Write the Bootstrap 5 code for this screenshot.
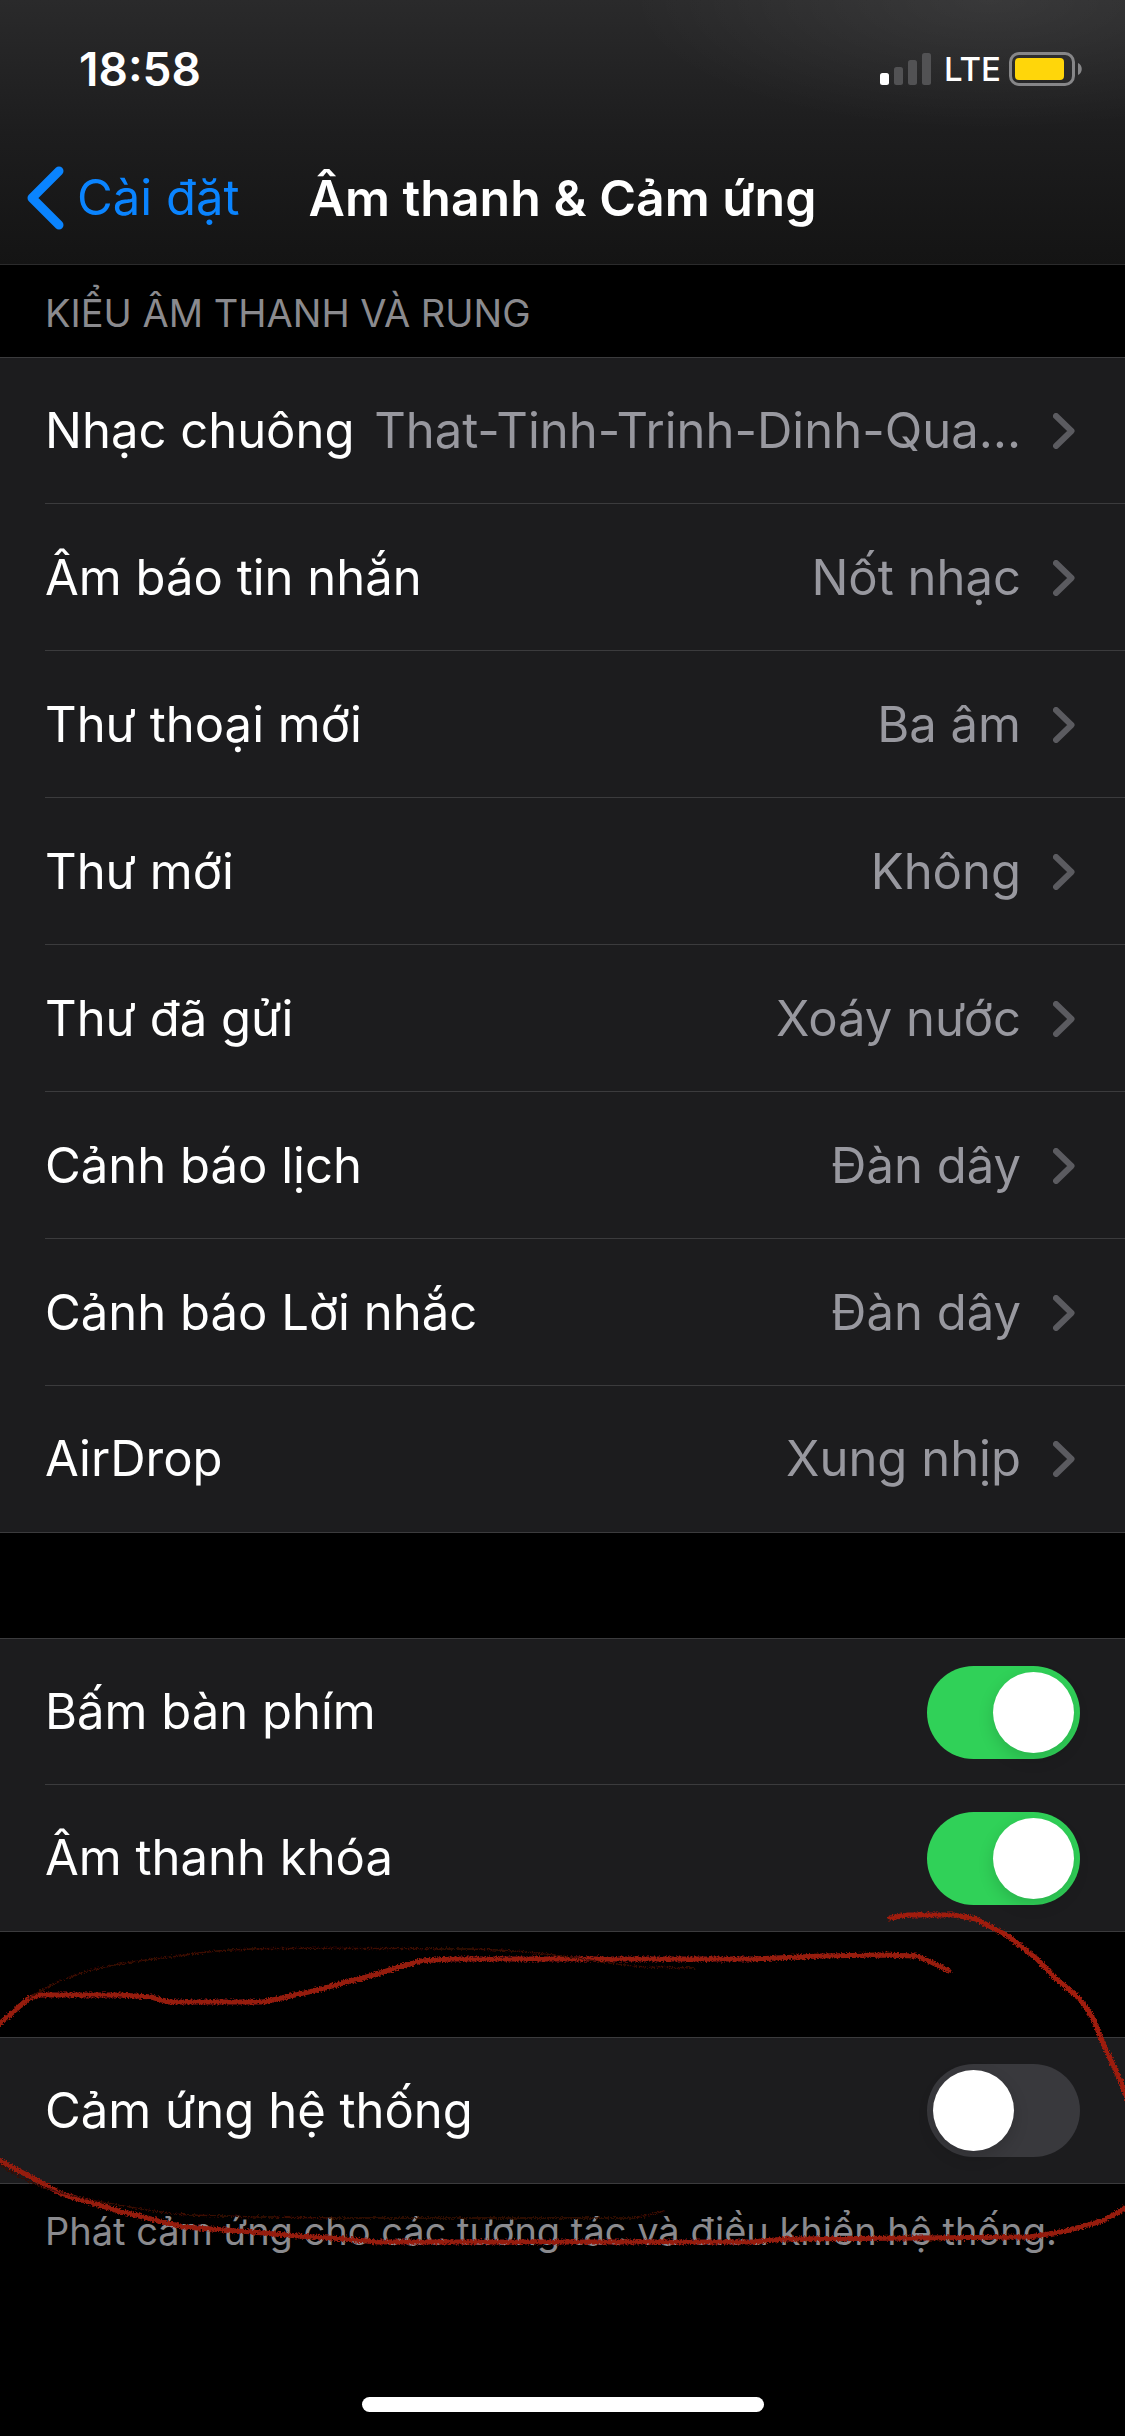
<!DOCTYPE html>
<html lang="vi" data-bs-theme="dark">
<head>
<meta charset="utf-8">
<meta name="viewport" content="width=device-width, initial-scale=1">
<title>Âm thanh &amp; Cảm ứng</title>
<link href="https://cdn.jsdelivr.net/npm/bootstrap@5.3.0/dist/css/bootstrap.min.css" rel="stylesheet">
<style>
  body { background: #000; color: #fff; font-family: Inter, "Noto Sans", sans-serif; font-size: 49px; line-height: 60px; }
  .top-area { height: 265px; border-bottom: 1px solid #2b2b2c;
    background: radial-gradient(ellipse 360px 130px at 88% 0, rgba(255,255,255,.07), transparent), linear-gradient(#2a2a2b, #1d1d1e 50%, #141414); }
  .status-bar { height: 138px; padding: 0 42px 0 79px; }
  .clock { font-size: 46px; font-weight: 600; }
  .network { font-size: 33px; font-weight: 500; }
  .title-bar { display: grid; grid-template-columns: 1fr auto 1fr; height: 120px; padding: 0 26px; }
  .title-bar h1 { font-size: 50px; line-height: 60px; font-weight: 600; }
  .back-link { color: #0a84ff; gap: 13px; }
  .section-head { font-size: 38px; line-height: 44px; font-weight: 400; color: #8a8a8e; padding: 26px 45px 22px; }
  .settings { --bs-list-group-bg: #1c1c1e; --bs-list-group-color: #fff; border-top: 1px solid #3b3b3d; border-bottom: 1px solid #3b3b3d; }
  .settings .list-group-item { height: 147px; border: 0; padding: 0 45px; gap: 16px; position: relative; }
  .settings .list-group-item:first-child { height: 146px; }
  .settings .list-group-item:last-child { height: 146px; }
  .settings .list-group-item:only-child { height: 145px; }
  .settings .list-group-item:not(:last-child)::after { content: ""; position: absolute; left: 45px; right: 0; bottom: 0; border-bottom: 1px solid #3b3b3d; }
  .row-value { color: #98989f; gap: 32px; }
  .row-value svg { margin-right: 5px; flex: none; }
  .spaced { margin-top: 105px; }
  .settings .form-check-input { width: 153px; height: 93px; margin: 0; border: 0; border-radius: 47px; background: #39393d; padding: 6px; box-shadow: none; }
  .settings .form-check-input::before { content: ""; display: block; width: 81px; height: 81px; border-radius: 50%; background: #fff; box-shadow: 0 6px 16px rgba(0,0,0,.15); }
  .settings .form-check-input:checked { background: #30d158; }
  .settings .form-check-input:checked::before { margin-left: auto; }
  .footnote { font-size: 38px; line-height: 44px; color: #8a8a8e; padding: 25px 45px; }
  .scribble { left: 0; top: -137px; width: 100%; height: 360px; pointer-events: none; z-index: 2; }
  .home-bar { width: 402px; height: 15px; border-radius: 8px; background: #fff; margin-bottom: 24px; }
</style>
<script src="https://cdn.jsdelivr.net/npm/bootstrap@5.3.0/dist/js/bootstrap.bundle.min.js"></script>
</head>
<body class="d-flex flex-column min-vh-100 overflow-x-hidden">

<svg class="d-none" aria-hidden="true">
  <symbol id="chevron" viewBox="0 0 22 36"><path d="M3 3 18.500 18 3 33" fill="none" stroke="#5b5b60" stroke-width="6" stroke-linecap="round" stroke-linejoin="round"/></symbol>
</svg>

<header class="top-area">
  <div class="status-bar d-flex align-items-center justify-content-between">
    <span class="clock">18:58</span>
    <div class="d-flex align-items-center">
      <svg width="52" height="32" viewBox="0 0 52 32" role="img" aria-label="Sóng di động">
        <rect x="0" y="20" width="9" height="12" rx="2.500" fill="#fff"/>
        <g fill="#525254"><rect x="14" y="14" width="9" height="18" rx="2.500"/><rect x="28" y="7" width="9" height="25" rx="2.500"/><rect x="42" y="0" width="9" height="32" rx="2.500"/></g>
      </svg>
      <span class="network ms-2 me-2 ps-1">LTE</span>
      <svg width="74" height="34" viewBox="0 0 74 34" role="img" aria-label="Pin">
        <rect x="1.500" y="1.500" width="63" height="31" rx="8.500" fill="none" stroke="#868688" stroke-width="3"/>
        <rect x="6" y="6" width="49" height="22" rx="4" fill="#ffd60a"/>
        <path d="M69 11c5 2 5 10 0 12z" fill="#868688"/>
      </svg>
    </div>
  </div>
  <nav class="title-bar align-items-center">
    <a href="#" class="back-link d-flex align-items-center text-decoration-none">
      <svg width="38" height="64" viewBox="0 0 38 64" aria-hidden="true"><path d="M33 5 6 32 33 59" fill="none" stroke="#0a84ff" stroke-width="9" stroke-linecap="round" stroke-linejoin="round"/></svg>
      Cài đặt
    </a>
    <h1 class="m-0 text-nowrap">Âm thanh &amp; Cảm ứng</h1>
  </nav>
</header>

<main>
  <h2 class="section-head text-uppercase m-0">Kiểu âm thanh và rung</h2>
  <div class="settings list-group list-group-flush">
    <a href="#" class="list-group-item d-flex align-items-center justify-content-between text-nowrap">Nhạc chuông<span class="row-value d-flex align-items-center">That-Tinh-Trinh-Dinh-Qua…<svg width="22" height="36"><use href="#chevron"/></svg></span></a>
    <a href="#" class="list-group-item d-flex align-items-center justify-content-between">Âm báo tin nhắn<span class="row-value d-flex align-items-center">Nốt nhạc<svg width="22" height="36"><use href="#chevron"/></svg></span></a>
    <a href="#" class="list-group-item d-flex align-items-center justify-content-between">Thư thoại mới<span class="row-value d-flex align-items-center">Ba âm<svg width="22" height="36"><use href="#chevron"/></svg></span></a>
    <a href="#" class="list-group-item d-flex align-items-center justify-content-between">Thư mới<span class="row-value d-flex align-items-center">Không<svg width="22" height="36"><use href="#chevron"/></svg></span></a>
    <a href="#" class="list-group-item d-flex align-items-center justify-content-between">Thư đã gửi<span class="row-value d-flex align-items-center">Xoáy nước<svg width="22" height="36"><use href="#chevron"/></svg></span></a>
    <a href="#" class="list-group-item d-flex align-items-center justify-content-between">Cảnh báo lịch<span class="row-value d-flex align-items-center">Đàn dây<svg width="22" height="36"><use href="#chevron"/></svg></span></a>
    <a href="#" class="list-group-item d-flex align-items-center justify-content-between">Cảnh báo Lời nhắc<span class="row-value d-flex align-items-center">Đàn dây<svg width="22" height="36"><use href="#chevron"/></svg></span></a>
    <a href="#" class="list-group-item d-flex align-items-center justify-content-between">AirDrop<span class="row-value d-flex align-items-center">Xung nhịp<svg width="22" height="36"><use href="#chevron"/></svg></span></a>
  </div>

  <div class="settings list-group list-group-flush spaced">
    <div class="list-group-item d-flex align-items-center justify-content-between">
      <label for="keyClicks">Bấm bàn phím</label>
      <input class="form-check-input" type="checkbox" role="switch" id="keyClicks" checked>
    </div>
    <div class="list-group-item d-flex align-items-center justify-content-between">
      <label for="lockSound">Âm thanh khóa</label>
      <input class="form-check-input" type="checkbox" role="switch" id="lockSound" checked>
    </div>
  </div>

  <section class="position-relative spaced">
    <div class="settings list-group list-group-flush">
      <div class="list-group-item d-flex align-items-center justify-content-between">
        <label for="haptics">Cảm ứng hệ thống</label>
        <input class="form-check-input" type="checkbox" role="switch" id="haptics">
      </div>
    </div>
    <p class="footnote m-0">Phát cảm ứng cho các tương tác và điều khiển hệ thống.</p>

    <!-- hand-drawn red crayon ring around the haptics switch -->
    <svg class="scribble position-absolute" viewBox="0 1900 1125 360" preserveAspectRatio="none" fill="none" stroke-linecap="round" stroke-linejoin="round" aria-hidden="true">
      <defs>
        <filter id="crayon" filterUnits="userSpaceOnUse" x="-20" y="1900" width="1165" height="360">
          <feTurbulence type="fractalNoise" baseFrequency="0.6" numOctaves="2" seed="4"/>
          <feDisplacementMap in="SourceGraphic" scale="5" xChannelSelector="R" yChannelSelector="G"/>
        </filter>
      </defs>
      <g filter="url(#crayon)" transform="translate(1 1)">
        <g stroke="#961b10" stroke-width="5">
          <path d="M-4 2025 28 1997 38 1994H118L150 1996 168 2001H262L312 1990 369 1975 419 1960 450 1958H750L820 1955 880 1954 915 1955 930 1961 948 1970"/>
          <path d="M-4 2158 61 2193 118 2210 158 2220 183 2226 251 2231 297 2235 344 2238 376 2241H750L785 2238 921 2237 1029 2236 1065 2230 1101 2220 1118 2211 1130 2202"/>
          <path d="M889 1917 907 1914H953L975 1918 1007 1935 1036 1958 1054 1977 1079 1998 1092 2017 1101 2040 1111 2062 1120 2081 1128 2103" stroke="#a01c10"/>
        </g>
        <g stroke="#3b0b06" stroke-width="1.500">
          <path d="M28 1997C60 1976 90 1964 179 1955C230 1945 287 1947 466 1948C562 1950 580 1961 645 1966L693 1967"/>
          <path d="M0 2164C36 2192 90 2200 172 2213C258 2218 400 2217 634 2217L663 2210"/>
        </g>
      </g>
    </svg>
  </section>
</main>

<div class="home-bar mx-auto mt-auto"></div>
</body>
</html>
